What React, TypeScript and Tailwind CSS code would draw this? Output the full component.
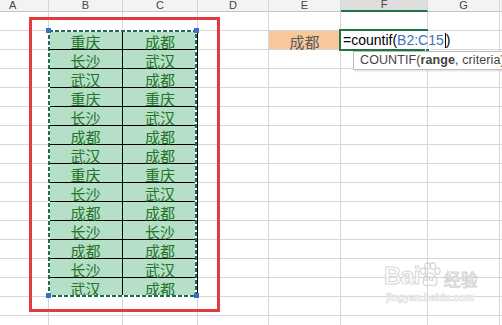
import React from "react";

const data: [string, string][] = [
  ["重庆", "成都"],
  ["长沙", "武汉"],
  ["武汉", "成都"],
  ["重庆", "重庆"],
  ["长沙", "武汉"],
  ["成都", "成都"],
  ["武汉", "成都"],
  ["重庆", "重庆"],
  ["长沙", "武汉"],
  ["成都", "成都"],
  ["长沙", "长沙"],
  ["成都", "成都"],
  ["长沙", "武汉"],
  ["武汉", "成都"],
];

const widths = [
  "w-[49px]",
  "w-[74px]",
  "w-[75px]",
  "w-[71px]",
  "w-[72px]",
  "w-[87px]",
  "w-[72px]",
  "w-[40px]",
];
const letters = ["A", "B", "C", "D", "E", "F", "G", ""];

const cjk = "font-['Noto_Sans_CJK_SC',sans-serif]";

function Cell({ col, row }: { col: number; row: number }) {
  const isData = row >= 2 && row <= 15 && (col === 1 || col === 2);
  const base = `${widths[col]} shrink-0 h-full border-r border-b flex items-center justify-center`;
  if (isData) {
    const txt = data[row - 2][col - 1];
    return (
      <div
        className={`${base} bg-[#b5dfc6] border-black text-[15px] text-[#24742a] ${cjk} leading-none pt-[2px]`}
      >
        {txt}
      </div>
    );
  }
  let cls = `${base} border-[#d6d6d6]`;
  if (row === 1 && (col === 1 || col === 2)) cls = `${base} border-r-[#d6d6d6] border-b-black`;
  if (col === 0 && row >= 2 && row <= 15) cls = `${base} border-r-black border-b-[#d6d6d6]`;
  if (col === 4 && row === 2) {
    return (
      <div
        className={`${base} border-[#d6d6d6] bg-[#f8c79b] text-[15px] text-[#5a5a5a] ${cjk} leading-none pt-[2px]`}
      >
        成都
      </div>
    );
  }
  return <div className={cls} />;
}

function Paw() {
  return (
    <svg width="24" height="26" viewBox="0 0 24 26">
      <g fill="none" stroke="#d2d2d2" strokeWidth="1.2">
        <ellipse cx="5" cy="9" rx="2.6" ry="3.2" />
        <ellipse cx="9.5" cy="4" rx="2.6" ry="3.2" />
        <ellipse cx="15" cy="4" rx="2.6" ry="3.2" />
        <ellipse cx="19.5" cy="9" rx="2.6" ry="3.2" />
        <path d="M5 20 C5 14 9 11 12 11 C15 11 19 14 19 20 C19 24 15 24 12 23 C9 24 5 24 5 20 Z" />
      </g>
    </svg>
  );
}

export default function App() {
  const rowNums = Array.from({ length: 17 }, (_, i) => i + 1);
  return (
    <div className="relative w-[502px] h-[325px] overflow-hidden bg-white font-['Liberation_Sans',Arial,sans-serif]">
      <div className="flex flex-col">
        {/* column header */}
        <div className="flex h-[12px]">
          {letters.map((l, i) => (
            <div
              key={i}
              className={`${widths[i]} shrink-0 h-full border-r border-[#d6d6d6] flex items-end justify-center ${
                i === 5
                  ? "bg-[#dedede] border-b-2 border-b-[#217346]"
                  : "bg-[#f3f3f3] border-b border-b-[#c4c4c4]"
              } ${i === 0 ? "justify-start pl-[9px]" : ""}`}
            >
              <span className="text-[11px] leading-[11px] text-[#444]">{l}</span>
            </div>
          ))}
        </div>
        {rowNums.map((r) => (
          <div key={r} className="flex h-[19px]">
            {widths.map((_, c) => (
              <Cell key={c} col={c} row={r} />
            ))}
          </div>
        ))}
      </div>

      {/* red annotation rectangle */}
      <div className="absolute left-[29px] top-[17px] w-[191px] h-[295px] border-[3px] border-[#e23b3f]" />

      {/* copy selection marching ants */}
      <svg className="absolute left-[48px] top-[30px]" width="149" height="267">
        <rect x="1" y="1" width="147" height="265" fill="none" stroke="#ffffff" strokeWidth="2" />
        <rect
          x="1"
          y="1"
          width="147"
          height="265"
          fill="none"
          stroke="#1e6b55"
          strokeWidth="2"
          strokeDasharray="4 2"
        />
      </svg>
      {/* handles */}
      <div className="absolute left-[46px] top-[28px] w-[5px] h-[5px] bg-[#3b6fc6]" />
      <div className="absolute left-[194px] top-[28px] w-[5px] h-[5px] bg-[#3b6fc6]" />
      <div className="absolute left-[46px] top-[293px] w-[5px] h-[5px] bg-[#3b6fc6]" />
      <div className="absolute left-[194px] top-[293px] w-[5px] h-[5px] bg-[#3b6fc6]" />

      {/* active cell F2 */}
      <div className="absolute left-[339px] top-[29px] w-[89px] h-[22px] border-2 border-r-0 border-[#217346]" />
      <div className="absolute left-[425px] top-[48px] w-[5px] h-[5px] bg-[#217346] border border-white" />
      <div className="absolute left-[343px] top-[31px] h-[18px] flex items-center text-[14px] leading-none text-black whitespace-nowrap">
        <span>=countif(</span>
        <span className="text-[#3f6fc0]">B2:C15</span>
        <span className="w-px h-[15px] bg-black ml-[1px]" />
        <span>)</span>
      </div>

      {/* function tooltip */}
      <div className="absolute left-[353px] top-[51px] h-[19px] pl-[6px] pr-[10px] bg-white border border-[#bdbdbd] shadow-[1px_1px_2px_rgba(0,0,0,0.15)] flex items-center text-[12.5px] tracking-[0.1px] leading-none text-[#444] whitespace-nowrap">
        <span>COUNTIF(</span>
        <span className="font-bold">range</span>
        <span>, criteria)</span>
      </div>

      {/* watermark */}
      <div className="absolute left-[384px] top-[262px] flex flex-col items-start opacity-90">
        <div className="flex items-end">
          <span className="text-[24px] leading-none font-bold text-white [-webkit-text-stroke:1px_#d4d4d4] tracking-[-0.5px]">
            Bai
          </span>
          <div className="relative -ml-[2px]">
            <Paw />
            <span className="absolute left-[5px] top-[12px] text-[9px] font-bold leading-none text-[#d4d4d4]">du</span>
          </div>
          <span className={`ml-[2px] text-[17px] leading-none text-white [-webkit-text-stroke:1px_#d4d4d4] ${cjk} pb-[1px]`}>
            经验
          </span>
        </div>
        <span className="mt-[5px] ml-[2px] text-[10px] leading-none font-bold text-white [-webkit-text-stroke:0.6px_#d8d8d8]">
          jingyan.baidu.com
        </span>
      </div>
    </div>
  );
}
